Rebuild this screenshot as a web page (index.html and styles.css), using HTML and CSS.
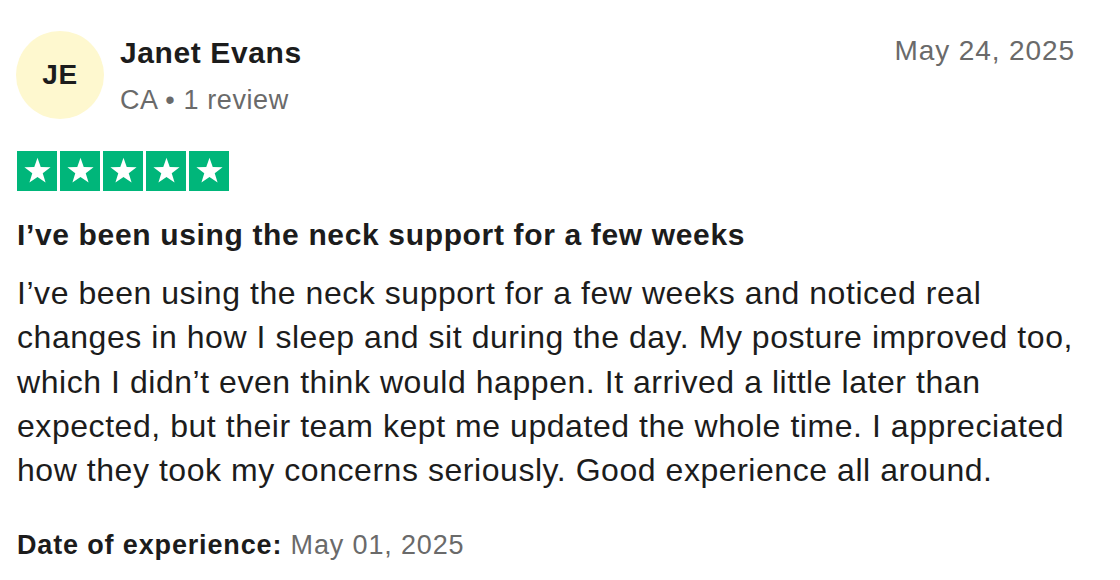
FILE: index.html
```html
<!DOCTYPE html>
<html>
<head>
<meta charset="utf-8">
<link rel="stylesheet" href="styles.css">
</head>
<body>
<article class="review">
  <header class="head">
    <div class="avatar">JE</div>
    <div class="who">
      <div class="name">Janet Evans</div>
      <div class="meta">CA • 1 review</div>
    </div>
    <time class="date">May 24, 2025</time>
  </header>
  <div class="stars">
    <span class="star"><svg viewBox="0 0 24 24"><path d="M12 2L14.35 8.76L21.51 8.91L15.8 13.24L17.88 20.09L12 16L6.12 20.09L8.2 13.24L2.49 8.91L9.65 8.76Z" fill="#fff"/></svg></span>
    <span class="star"><svg viewBox="0 0 24 24"><path d="M12 2L14.35 8.76L21.51 8.91L15.8 13.24L17.88 20.09L12 16L6.12 20.09L8.2 13.24L2.49 8.91L9.65 8.76Z" fill="#fff"/></svg></span>
    <span class="star"><svg viewBox="0 0 24 24"><path d="M12 2L14.35 8.76L21.51 8.91L15.8 13.24L17.88 20.09L12 16L6.12 20.09L8.2 13.24L2.49 8.91L9.65 8.76Z" fill="#fff"/></svg></span>
    <span class="star"><svg viewBox="0 0 24 24"><path d="M12 2L14.35 8.76L21.51 8.91L15.8 13.24L17.88 20.09L12 16L6.12 20.09L8.2 13.24L2.49 8.91L9.65 8.76Z" fill="#fff"/></svg></span>
    <span class="star"><svg viewBox="0 0 24 24"><path d="M12 2L14.35 8.76L21.51 8.91L15.8 13.24L17.88 20.09L12 16L6.12 20.09L8.2 13.24L2.49 8.91L9.65 8.76Z" fill="#fff"/></svg></span>
  </div>
  <h2 class="title">I’ve been using the neck support for a few weeks</h2>
  <p class="body">I’ve been using the neck support for a few weeks and noticed real changes in how I sleep and sit during the day. My posture improved too, which I didn’t even think would happen. It arrived a little later than expected, but their team kept me updated the whole time. I appreciated how they took my concerns seriously. Good experience all around.</p>
  <p class="exp"><b>Date of experience:</b> <span class="expdate">May 01, 2025</span></p>
</article>
</body>
</html>
```
FILE: styles.css
```css
* { box-sizing: border-box; }
html, body { margin: 0; padding: 0; background: #fff; }
body { font-family: "Liberation Sans", Arial, sans-serif; color: #1c1c1c; }
.review { padding: 31px 45px 0 17px; width: 1120px; }
.head { display: flex; align-items: flex-start; }
.avatar {
  width: 88px; height: 88px; border-radius: 50%; margin-left: -1px;
  background: #fef8cf; display: flex; align-items: center; justify-content: center;
  font-weight: 700; font-size: 28px; letter-spacing: 0.6px; color: #1c1c1c; flex: none;
}
.who { margin-left: 16px; padding-top: 4px; flex: 1; }
.name { font-weight: 700; font-size: 30px; letter-spacing: 0.6px; line-height: 36px; }
.meta { font-size: 27px; letter-spacing: 0.6px; color: #6a6a6a; margin-top: 13px; line-height: 32px; }
.date { font-size: 28px; letter-spacing: 0.9px; color: #6a6a6a; padding-top: 3px; line-height: 34px; }
.stars { display: flex; gap: 3px; margin-top: 32px; }
.star { width: 40px; height: 40px; background: #00b67a; display: flex; align-items: center; justify-content: center; }
.star svg { width: 33px; height: 33px; }
.title { font-size: 30px; letter-spacing: 0.65px; font-weight: 700; margin: 26px 0 0; line-height: 36px; }
.body { font-size: 32px; letter-spacing: 0.55px; line-height: 44.25px; margin: 18px 0 0; }
.exp { font-size: 27px; letter-spacing: 0.85px; line-height: 32px; margin: 37px 0 0; }
.expdate { color: #6a6a6a; }
```
